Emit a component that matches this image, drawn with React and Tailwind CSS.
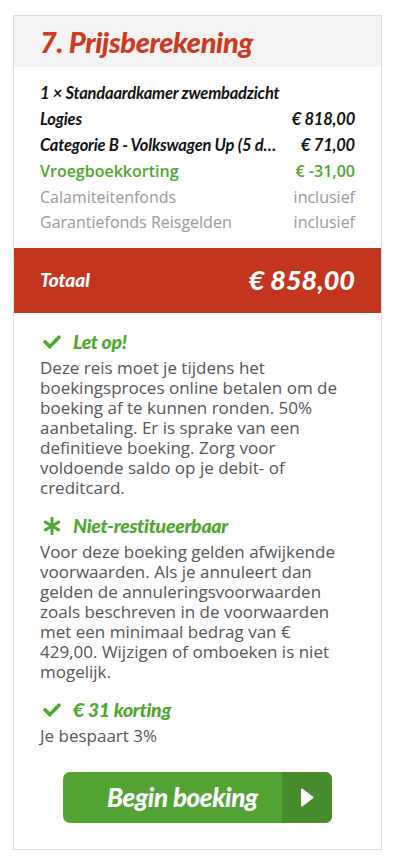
import React from "react";
import { FaCheck, FaAsterisk } from "react-icons/fa";

const heading = { fontFamily: "Lato, 'Noto Sans', sans-serif" };
const body = { fontFamily: "'Open Sans', 'Noto Sans', sans-serif" };

const lines = [
  { label: "Logies", value: "€ 818,00" },
  { label: "Categorie B - Volkswagen Up (5 d…", value: "€ 71,00" },
];

const Note = ({ icon, title, children }) => (
  <div>
    <div className="flex items-center h-6 gap-[12px] pl-[3px]">
      {icon}
      <span className="text-[19.5px] font-black italic text-[#4ea72e] tracking-[-0.3px]" style={heading}>
        {title}
      </span>
    </div>
    <p className="mt-1 pr-[10px] text-[17px] leading-[20px] text-[#555]" style={body}>
      {children}
    </p>
  </div>
);

export default function App() {
  return (
    <div className="min-h-[866px] bg-white pt-[15px] pl-[13px]">
      <div className="w-[369px] border border-[#dcdcdc] bg-white">
        {/* Kop */}
        <div className="h-[51px] bg-[#f4f4f4] flex items-center px-[26px]">
          <h2 className="text-[29px] font-black italic text-[#cd3a22] tracking-[-0.4px]" style={heading}>
            7. Prijsberekening
          </h2>
        </div>

        {/* Regels */}
        <div className="px-[26px] pt-[13px] pb-[14px]">
          <div className="h-[26px] flex items-center text-[16.5px] font-bold italic text-[#111] tracking-[-0.2px]" style={heading}>
            1 × Standaardkamer zwembadzicht
          </div>
          {lines.map((l) => (
            <div key={l.label} className="h-[26px] flex items-center justify-between gap-3 text-[16.5px] font-bold italic text-[#111] tracking-[-0.2px]" style={heading}>
              <span className="whitespace-nowrap">{l.label}</span>
              <span className="shrink-0">{l.value}</span>
            </div>
          ))}
          <div className="h-[26px] flex items-center justify-between text-[16px] font-semibold text-[#4ea72e]" style={body}>
            <span>Vroegboekkorting</span>
            <span>€ -31,00</span>
          </div>
          <div className="h-[25px] flex items-center justify-between text-[16px] text-[#999]" style={body}>
            <span>Calamiteitenfonds</span>
            <span>inclusief</span>
          </div>
          <div className="h-[25px] flex items-center justify-between text-[16px] text-[#999]" style={body}>
            <span>Garantiefonds Reisgelden</span>
            <span>inclusief</span>
          </div>
        </div>

        {/* Totaal */}
        <div className="h-[65px] bg-[#c4351f] flex items-center justify-between px-[26px] text-white italic font-black" style={heading}>
          <span className="text-[19px]">Totaal</span>
          <span className="text-[27px]">€ 858,00</span>
        </div>

        {/* Info */}
        <div className="px-[26px] pt-[17px] pb-[26px]">
          <Note icon={<FaCheck className="text-[#4ea72e] text-[18px]" />} title="Let op!">
            Deze reis moet je tijdens het boekingsproces online betalen om de boeking af te kunnen ronden. 50%
            aanbetaling. Er is sprake van een definitieve boeking. Zorg voor voldoende saldo op je debit- of
            creditcard.
          </Note>
          <div className="mt-4">
            <Note icon={<FaAsterisk className="text-[#4ea72e] text-[18px]" />} title="Niet-restitueerbaar">
              Voor deze boeking gelden afwijkende voorwaarden. Als je annuleert dan gelden de
              annuleringsvoorwaarden zoals beschreven in de voorwaarden met een minimaal bedrag van € 429,00.
              Wijzigen of omboeken is niet mogelijk.
            </Note>
          </div>
          <div className="mt-4">
            <Note icon={<FaCheck className="text-[#4ea72e] text-[18px]" />} title="€ 31 korting">
              Je bespaart 3%
            </Note>
          </div>

          <div className="mt-[26px] flex justify-center">
            <button className="w-[269px] h-[51px] rounded-[7px] overflow-hidden flex bg-[#52a334]">
              <span className="flex-1 flex items-center justify-center pl-[20px] text-white text-[26px] font-black italic tracking-[-0.4px]" style={heading}>
                Begin boeking
              </span>
              <span className="w-[50px] bg-[#468c2c] flex items-center justify-center">
                <svg width="14" height="19" viewBox="0 0 14 19">
                  <path d="M2 1.5 L12.5 9.5 L2 17.5 Z" fill="white" stroke="white" strokeWidth="2" strokeLinejoin="round" />
                </svg>
              </span>
            </button>
          </div>
        </div>
      </div>
    </div>
  );
}
